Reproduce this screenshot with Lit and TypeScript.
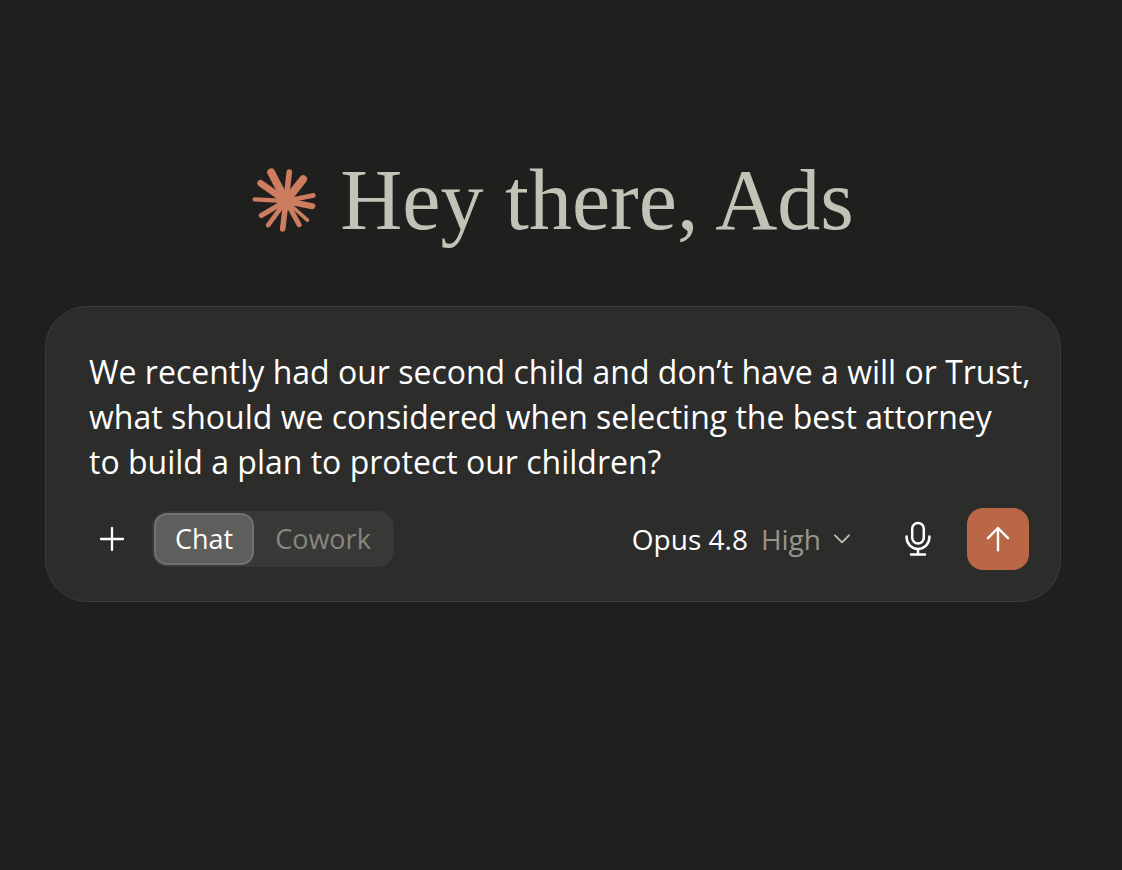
import { LitElement, html, css, svg } from "lit";
import { customElement, state } from "lit/decorators.js";

// Each ray of the burst: tip x, tip y, stroke width.
const RAYS = [
  [93, 51, 24],
  [148, 50, 17],
  [190, 72, 24],
  [221, 121, 14],
  [218, 154, 18],
  [203, 196, 11],
  [178, 210, 15],
  [128, 223, 17],
  [84, 211, 14],
  [63, 182, 15],
  [43, 133, 13],
  [61, 84, 20],
];

@customElement("app-root")
export class AppRoot extends LitElement {
  static styles = css`
    :host {
      display: block;
      min-height: 100vh;
      box-sizing: border-box;
      padding: 152px 61px 40px 45px;
      background: #1f1f1d;
      color: #fff;
      font-family: "Open Sans", sans-serif;
    }
    .greeting {
      display: flex;
      align-items: center;
      justify-content: center;
      gap: 24px;
      margin: 0 0 58px;
      color: #c3c2b7;
      font: 400 86px/96px "Liberation Serif", serif;
    }
    .burst {
      flex: none;
      width: 64px;
      height: 64px;
      stroke: #cd7c5f;
      fill: #cd7c5f;
      stroke-linecap: round;
    }
    .composer {
      display: flex;
      flex-direction: column;
      gap: 24px;
      padding: 42px 25px 31px 31px;
      border: 1px solid #3c3c3a;
      border-radius: 42px;
      background: #2c2c2a;
    }
    .prompt {
      display: block;
      box-sizing: border-box;
      width: 100%;
      height: 135px;
      margin: 0;
      padding: 0 0 0 12px;
      border: 0;
      outline: 0;
      resize: none;
      overflow: hidden;
      background: none;
      color: inherit;
      font: 400 32px/45px "Open Sans", sans-serif;
    }
    .bar {
      display: flex;
      align-items: center;
      padding-right: 6px;
    }
    button {
      display: flex;
      align-items: center;
      justify-content: center;
      margin: 0;
      padding: 0;
      border: 0;
      background: none;
      color: inherit;
      font: 400 27px/36px "Open Sans", sans-serif;
      cursor: pointer;
    }
    svg {
      display: block;
      fill: none;
      stroke: currentColor;
      stroke-linecap: round;
      stroke-linejoin: round;
    }
    .burst {
      fill: #cd7c5f;
      stroke: #cd7c5f;
    }
    .add {
      width: 44px;
      height: 44px;
      margin: 0 18px 0 13px;
    }
    .modes {
      display: flex;
      padding: 2px;
      border-radius: 16px;
      background: #383836;
    }
    .mode {
      height: 52px;
      padding: 0 19px;
      border: 2px solid transparent;
      border-radius: 13px;
      color: #87867f;
    }
    .mode.on {
      border-color: #71716f;
      background: #5e5e5c;
      color: #fff;
    }
    .model {
      gap: 13px;
      margin-left: auto;
      font-size: 28px;
    }
    .effort {
      color: #97958c;
    }
    .chevron {
      color: #c3c2b7;
    }
    .mic {
      width: 44px;
      height: 44px;
      margin: 0 27px 0 46px;
    }
    .send {
      width: 62px;
      height: 62px;
      border-radius: 16px;
      background: #ba6748;
    }
  `;

  @state() private mode = "Chat";

  render() {
    return html`
      <main>
        <h1 class="greeting">
          <svg class="burst" viewBox="36 38 192 194" aria-hidden="true">
            <circle cx="138" cy="138" r="27" stroke="none"></circle>
            ${RAYS.map(
              ([x, y, w]) =>
                svg`<line x1="138" y1="138" x2=${x} y2=${y} stroke-width=${w}></line>`
            )}
          </svg>
          <span>Hey there, Ads</span>
        </h1>
        <form class="composer" @submit=${(e: Event) => e.preventDefault()}>
          <textarea
            class="prompt"
            aria-label="Message"
            spellcheck="false"
            .value=${"We recently had our second child and don’t have a will or Trust, what should we considered when selecting the best attorney\nto build a plan to protect our children?"}
          ></textarea>
          <div class="bar">
            <button class="add" type="button" aria-label="Add">
              <svg width="26" height="26" viewBox="0 0 26 26" stroke-width="2.3">
                <path d="M13 2v22M2 13h22"></path>
              </svg>
            </button>
            <div class="modes">
              ${["Chat", "Cowork"].map(
                (m) => html`<button
                  type="button"
                  class="mode ${m === this.mode ? "on" : ""}"
                  aria-pressed=${m === this.mode}
                  @click=${() => (this.mode = m)}
                >${m}</button>`
              )}
            </div>
            <button class="model" type="button">
              <span>Opus 4.8</span>
              <span class="effort">High</span>
              <svg class="chevron" width="16" height="10" viewBox="0 0 16 10" stroke-width="1.8">
                <path d="M1 1.3l7 7 7-7"></path>
              </svg>
            </button>
            <button class="mic" type="button" aria-label="Dictate">
              <svg width="26" height="36" viewBox="0 0 26 36" stroke-width="2.5">
                <rect x="7.200" y="2" width="11.600" height="20.500" rx="5.800"></rect>
                <path d="M1.600 15.500v1a11.400 11.400 0 0 0 22.800 0v-1M13 28v5.500M6 33.500h14"></path>
              </svg>
            </button>
            <button class="send" type="submit" aria-label="Send">
              <svg width="24" height="26" viewBox="0 0 24 26" stroke-width="2.4">
                <path d="M12 24.300V2M2 12.200L12 2l10 10.200"></path>
              </svg>
            </button>
          </div>
        </form>
      </main>
    `;
  }
}
